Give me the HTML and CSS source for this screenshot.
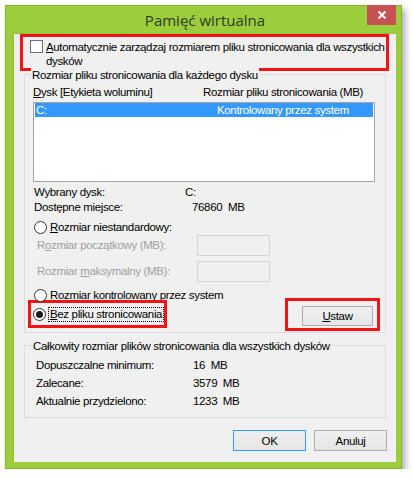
FILE: index.html
```html
<!DOCTYPE html>
<html lang="pl">
<head>
<meta charset="utf-8">
<title>Pamięć wirtualna</title>
<link rel="stylesheet" href="styles.css">
</head>
<body>
<div class="window">
  <div class="titlebar">
    <span class="title">Pamięć wirtualna</span>
    <div class="close">
      <svg width="10" height="10" viewBox="0 0 10 10"><path d="M1.5 1.5 L8.5 8.5 M8.5 1.5 L1.5 8.5" stroke="#fff" stroke-width="2" fill="none"/></svg>
    </div>
  </div>
  <div class="content">
    <div class="mark mark-auto">
      <div class="check-row">
        <span class="checkbox"></span>
        <span class="check-label"><u>A</u>utomatycznie zarządzaj rozmiarem pliku stronicowania dla wszystkich dysków</span>
      </div>
    </div>

    <div class="group group-disk">
      <div class="legend">Rozmiar pliku stronicowania dla każdego dysku</div>
      <div class="list-head">
        <span class="col-a"><u>D</u>ysk [Etykieta woluminu]</span>
        <span>Rozmiar pliku stronicowania (MB)</span>
      </div>
      <div class="listbox">
        <div class="list-row selected">
          <span class="col-drive">C:</span>
          <span>Kontrolowany przez system</span>
        </div>
      </div>
      <div class="info-row first">
        <span class="info-label">Wybrany dysk:</span>
        <span>C:</span>
      </div>
      <div class="info-row">
        <span class="info-label">Dostępne miejsce:</span>
        <span class="shift">76860&nbsp; MB</span>
      </div>
      <div class="radio-row r-custom">
        <span class="radio"></span>
        <span><u>R</u>ozmiar niestandardowy:</span>
      </div>
      <div class="field-row">
        <span class="field-label">R<u>o</u>zmiar początkowy (MB):</span>
        <span class="field"></span>
      </div>
      <div class="field-row second">
        <span class="field-label">Rozmiar <u>m</u>aksymalny (MB):</span>
        <span class="field"></span>
      </div>
      <div class="radio-row r-system">
        <span class="radio"></span>
        <span>Rozmiar <u>k</u>ontrolowany przez system</span>
      </div>
      <div class="bottom-row">
        <div class="mark mark-none">
          <div class="radio-row">
            <span class="radio checked"></span>
            <span class="focus"><u>B</u>ez pliku stronicowania</span>
          </div>
        </div>
        <div class="mark mark-set">
          <button class="btn btn-set"><u>U</u>staw</button>
        </div>
      </div>
    </div>

    <div class="group group-total">
      <div class="legend">Całkowity rozmiar plików stronicowania dla wszystkich dysków</div>
      <div class="total-row first">
        <span class="total-label">Dopuszczalne minimum:</span>
        <span>16&nbsp; MB</span>
      </div>
      <div class="total-row">
        <span class="total-label">Zalecane:</span>
        <span>3579&nbsp; MB</span>
      </div>
      <div class="total-row">
        <span class="total-label">Aktualnie przydzielono:</span>
        <span>1233&nbsp; MB</span>
      </div>
    </div>

    <div class="actions">
      <button class="btn btn-default">OK</button>
      <button class="btn">Anuluj</button>
    </div>
  </div>
</div>
</body>
</html>
```
FILE: styles.css
```css
* { box-sizing: border-box; }

html, body {
  margin: 0;
  padding: 0;
  background: #ffffff;
}

body {
  font-family: "Liberation Sans", Arial, sans-serif;
  font-size: 11.5px;
  letter-spacing: -0.35px;
  color: #000;
}

span { white-space: nowrap; }

u { text-decoration: underline; text-underline-offset: 1px; }

.window {
  margin: 5px 0 0 5px;
  width: 397px;
  height: 464px;
  background: #9bcd3c;
  border: 1px solid #86b52e;
  padding: 0 5px 6px 7px;
  display: flex;
  flex-direction: column;
  box-shadow: 3px 4px 7px rgba(0, 0, 0, 0.35);
}

.titlebar {
  height: 27px;
  position: relative;
  display: flex;
  justify-content: center;
  align-items: center;
}

.title {
  font-family: "Open Sans", "Noto Sans", sans-serif;
  font-size: 15px;
  letter-spacing: 0;
  color: #2f3a28;
  margin-left: 1px;
  margin-top: 1px;
}

.close {
  position: absolute;
  right: 0;
  top: -1px;
  width: 29px;
  height: 20px;
  background: #c75050;
  display: flex;
  align-items: center;
  justify-content: center;
}

.content {
  flex: 1;
  background: #f0f0f0;
  border: 1px solid #8fbc3a;
  border-width: 1px 0 0 1px;
  display: flex;
  flex-direction: column;
  line-height: 15px;
}

.mark {
  border: 3px solid #f01414;
}

.mark-auto {
  margin: 0 7px 0 6px;
  height: 37px;
  padding: 3px 0 0 7px;
}

.check-row {
  display: flex;
  align-items: flex-start;
}

.checkbox {
  flex: none;
  width: 13px;
  height: 13px;
  border: 1px solid #707070;
  background: #fff;
  margin-right: 3px;
}

.check-label {
  white-space: normal;
  line-height: 13.5px;
  margin-top: 1px;
  width: 340px;
}

.group {
  border: 1px solid #dcdcdc;
  margin: 0 10px 0 10px;
}

.group-disk {
  margin-top: 3px;
  height: 259px;
}

.legend {
  width: fit-content;
  background: #f0f0f0;
  height: 15px;
  margin-top: -7px;
  padding: 0 1px;
}

.group-disk .legend { margin-left: 6px; }
.group-total .legend { margin-left: 7px; }

.list-head {
  display: flex;
  margin-top: 2px;
  padding-left: 8px;
}

.col-a { width: 170px; }

.listbox {
  margin: 2px 10px 0 8px;
  height: 80px;
  background: #fff;
  border: 1px solid #a5a5a5;
  padding: 0 1px;
}

.list-row {
  display: flex;
  height: 14px;
  line-height: 14px;
  padding-left: 1px;
}

.list-row.selected {
  background: #3399ff;
  color: #fff;
}

.col-drive { width: 181px; }

.info-row {
  display: flex;
  padding-left: 9px;
}

.info-row.first { margin-top: 3px; }

.info-label { width: 151px; }

.shift { margin-left: 7px; }

.radio-row {
  display: flex;
  align-items: center;
  padding-left: 9px;
  height: 15px;
}

.r-custom { margin-top: 5px; }
.r-system { margin-top: 6px; }

.radio {
  flex: none;
  width: 13px;
  height: 13px;
  border-radius: 50%;
  border: 1px solid #333;
  background: #fff;
  margin-right: 3px;
  position: relative;
}

.radio.checked::after {
  content: "";
  position: absolute;
  left: 2px;
  top: 2px;
  width: 7px;
  height: 7px;
  border-radius: 50%;
  background: #1a1a1a;
}

.field-row {
  display: flex;
  align-items: center;
  height: 21px;
  padding-left: 12px;
  color: #a0a0a0;
}

.field-row.second { margin-top: 5px; }

.field-label { width: 160px; }

.field {
  width: 73px;
  height: 21px;
  border: 1px solid #d5d5d5;
  background: #f0f0f0;
}

.bottom-row {
  display: flex;
  justify-content: space-between;
  align-items: flex-start;
  margin-top: -5px;
}

.mark-none {
  margin: 2px 0 0 3px;
  width: 139px;
  height: 28px;
  padding-top: 1px;
}

.mark-none .radio-row {
  padding-left: 2px;
  height: 20px;
}

.focus {
  outline: 1px dotted #000;
  line-height: 13px;
  padding: 0 1px;
}

.mark-set {
  margin-right: 5px;
  width: 95px;
  height: 33px;
  padding: 5px 0 0 14px;
}

.btn {
  font-family: inherit;
  font-size: 11.5px;
  letter-spacing: -0.35px;
  color: #000;
  height: 20px;
  width: 71px;
  padding: 0;
  border: 1px solid #acacac;
  background: linear-gradient(#f0f0f0, #e5e5e5);
  line-height: 18px;
}

.group-total {
  margin-top: 12px;
  padding-bottom: 7px;
}

.total-row {
  display: flex;
  padding-left: 11px;
  height: 18px;
  line-height: 18px;
}

.total-row.first { margin-top: 2px; }

.total-label { width: 157px; }

.actions {
  display: flex;
  justify-content: flex-end;
  gap: 8px;
  margin: 12px 9px 0 0;
}

.actions .btn {
  width: 73px;
  height: 21px;
}

.btn-default {
  border-color: #3399ff;
}
```
